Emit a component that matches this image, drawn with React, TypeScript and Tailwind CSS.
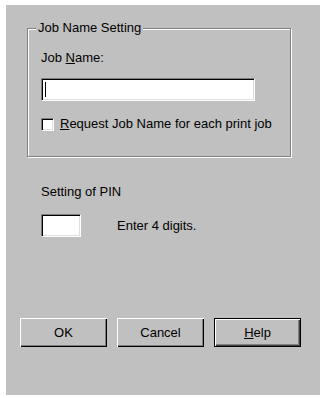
const sunken =
  'border border-t-[#808080] border-l-[#808080] border-b-white border-r-white bg-white shadow-[inset_1px_1px_0_#000,inset_-1px_-1px_0_#dfdfdf]'

function Btn({ children, isDefault }: { children: React.ReactNode; isDefault?: boolean }) {
  return (
    <button
      className={
        isDefault
          ? 'w-[87px] h-[29px] border border-black bg-[#c0c0c0] shadow-[inset_1px_1px_0_#fff,inset_-1px_-1px_0_#404040,inset_-2px_-2px_0_#808080] text-[13px] text-black'
          : 'w-[87px] h-[29px] bg-[#c0c0c0] shadow-[inset_1px_1px_0_#fff,inset_-1px_-1px_0_#000,inset_-2px_-2px_0_#808080] text-[13px] text-black'
      }
    >
      {children}
    </button>
  )
}

export default function App() {
  return (
    <div className="w-[320px] h-[398px] bg-white pt-[5px] pl-[6px] font-['Liberation_Sans',Arial,sans-serif] text-black">
      <div className="w-[314px] h-[390px] bg-[#c0c0c0] pt-[23px] pl-[21px]">
        <div className="relative w-[264px] h-[129px] border border-[#808080] shadow-[inset_1px_1px_0_#fff,1px_1px_0_#fff] px-[13px] pt-[21px]">
          <span className="absolute -top-[9px] left-[8px] bg-[#c0c0c0] px-[2px] text-[13px] leading-[16px]">
            Job Name Setting
          </span>
          <div className="text-[13px] leading-[16px]">
            Job <u>N</u>ame:
          </div>
          <div className={`mt-[12px] w-[214px] h-[23px] ${sunken} flex items-center pl-[3px]`}>
            <span className="w-[1px] h-[15px] bg-black" />
          </div>
          <label className="mt-[15px] flex items-center gap-[6px] text-[13px] leading-[16px]">
            <span className={`w-[13px] h-[13px] ${sunken}`} />
            <span>
              <u>R</u>equest Job Name for each print job
            </span>
          </label>
        </div>

        <div className="mt-[27px] pl-[14px] text-[13px] leading-[16px]">Setting of PIN</div>
        <div className="mt-[14px] pl-[14px] flex items-center gap-[36px]">
          <div className={`w-[40px] h-[23px] ${sunken}`} />
          <span className="text-[13px] leading-[16px]">Enter 4 digits.</span>
        </div>

        <div className="mt-[81px] -ml-[7px] flex gap-[10px]">
          <Btn>OK</Btn>
          <Btn>Cancel</Btn>
          <Btn isDefault>
            <u>H</u>elp
          </Btn>
        </div>
      </div>
    </div>
  )
}
